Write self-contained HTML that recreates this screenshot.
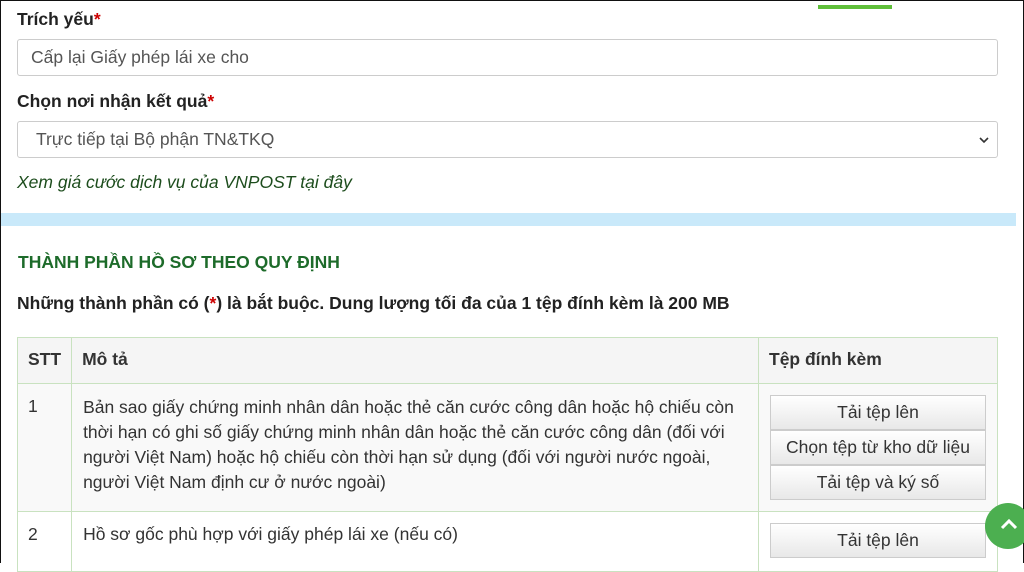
<!DOCTYPE html>
<html><head><meta charset="utf-8"><style>
*{box-sizing:border-box;margin:0;padding:0}
body{width:1024px;height:563px;overflow:hidden;background:#fff;font-family:"Liberation Sans",Arial,sans-serif;color:#333;position:relative;border:1px solid #111;border-bottom:none}
.abs{position:absolute}
.lbl{font-size:17.5px;font-weight:bold;color:#222}
.lbl span{color:#c00}
.inp{position:absolute;left:16px;width:981px;height:37px;border:1px solid #ccc;border-radius:3px;font-size:17.5px;color:#555;padding:7px 13px;background:#fff}
table{position:absolute;left:16px;top:336px;width:981px;border-collapse:collapse;font-size:17.5px;color:#333}
td,th{border:1px solid #c9e2c0;vertical-align:top;text-align:left}
th{background:#f5f5f5;height:46px;padding:11px 10px;font-weight:bold}
.btn{display:block;width:216px;height:35px;border:1px solid #ccc;background:linear-gradient(#fff,#e8e8e8);text-align:center;line-height:33px;font-size:17.5px;color:#333}
</style></head><body>
<div class="abs" style="left:817px;top:4px;width:74px;height:4px;background:#5fbf3a"></div>
<div class="abs lbl" style="left:16px;top:8px">Trích yếu<span>*</span></div>
<div class="inp" style="top:38px">Cấp lại Giấy phép lái xe cho</div>
<div class="abs lbl" style="left:16px;top:90px">Chọn nơi nhận kết quả<span>*</span></div>
<div class="inp" style="top:120px;padding-left:18px">Trực tiếp tại Bộ phận TN&amp;TKQ
<svg class="abs" style="right:8px;top:14px" width="10" height="8" viewBox="0 0 10 8"><path d="M1 2l4 4 4-4" stroke="#333" stroke-width="1.6" fill="none"/></svg></div>
<div class="abs" style="left:16px;top:171px;font-size:17.5px;font-style:italic;color:#1d4d1d">Xem giá cước dịch vụ của VNPOST tại đây</div>
<div class="abs" style="left:0;top:212px;width:1015px;height:13px;background:#c9e9fa"></div>
<div class="abs" style="left:17px;top:251px;font-size:17.5px;font-weight:bold;color:#1d6b2a">THÀNH PHẦN HỒ SƠ THEO QUY ĐỊNH</div>
<div class="abs" style="left:16px;top:292px;font-size:17.5px;font-weight:bold;color:#222">Những thành phần có (<span style="color:#c00">*</span>) là bắt buộc. Dung lượng tối đa của 1 tệp đính kèm là 200 MB</div>
<table>
<tr><th style="width:54px">STT</th><th>Mô tả</th><th style="width:239px">Tệp đính kèm</th></tr>
<tr style="background:#f9f9f9;height:128px"><td style="padding:12px 10px">1</td><td style="padding:11px 11px;line-height:25px">Bản sao giấy chứng minh nhân dân hoặc thẻ căn cước công dân hoặc hộ chiếu còn thời hạn có ghi số giấy chứng minh nhân dân hoặc thẻ căn cước công dân (đối với người Việt Nam) hoặc hộ chiếu còn thời hạn sử dụng (đối với người nước ngoài, người Việt Nam định cư ở nước ngoài)</td>
<td style="padding:11px 11px"><span class="btn">Tải tệp lên</span><span class="btn">Chọn tệp từ kho dữ liệu</span><span class="btn">Tải tệp và ký số</span></td></tr>
<tr style="height:60px"><td style="padding:12px 10px">2</td><td style="padding:12px 11px">Hồ sơ gốc phù hợp với giấy phép lái xe (nếu có)</td><td style="padding:11px 11px"><span class="btn">Tải tệp lên</span></td></tr>
</table>
<div class="abs" style="left:984px;top:502px;width:46px;height:46px;border-radius:50%;background:#4caf50"></div>
<svg class="abs" style="left:998px;top:516px" width="20" height="14" viewBox="0 0 20 14"><path d="M3 11l7-7 7 7" stroke="#fff" stroke-width="3" fill="none"/></svg>
</body></html>
